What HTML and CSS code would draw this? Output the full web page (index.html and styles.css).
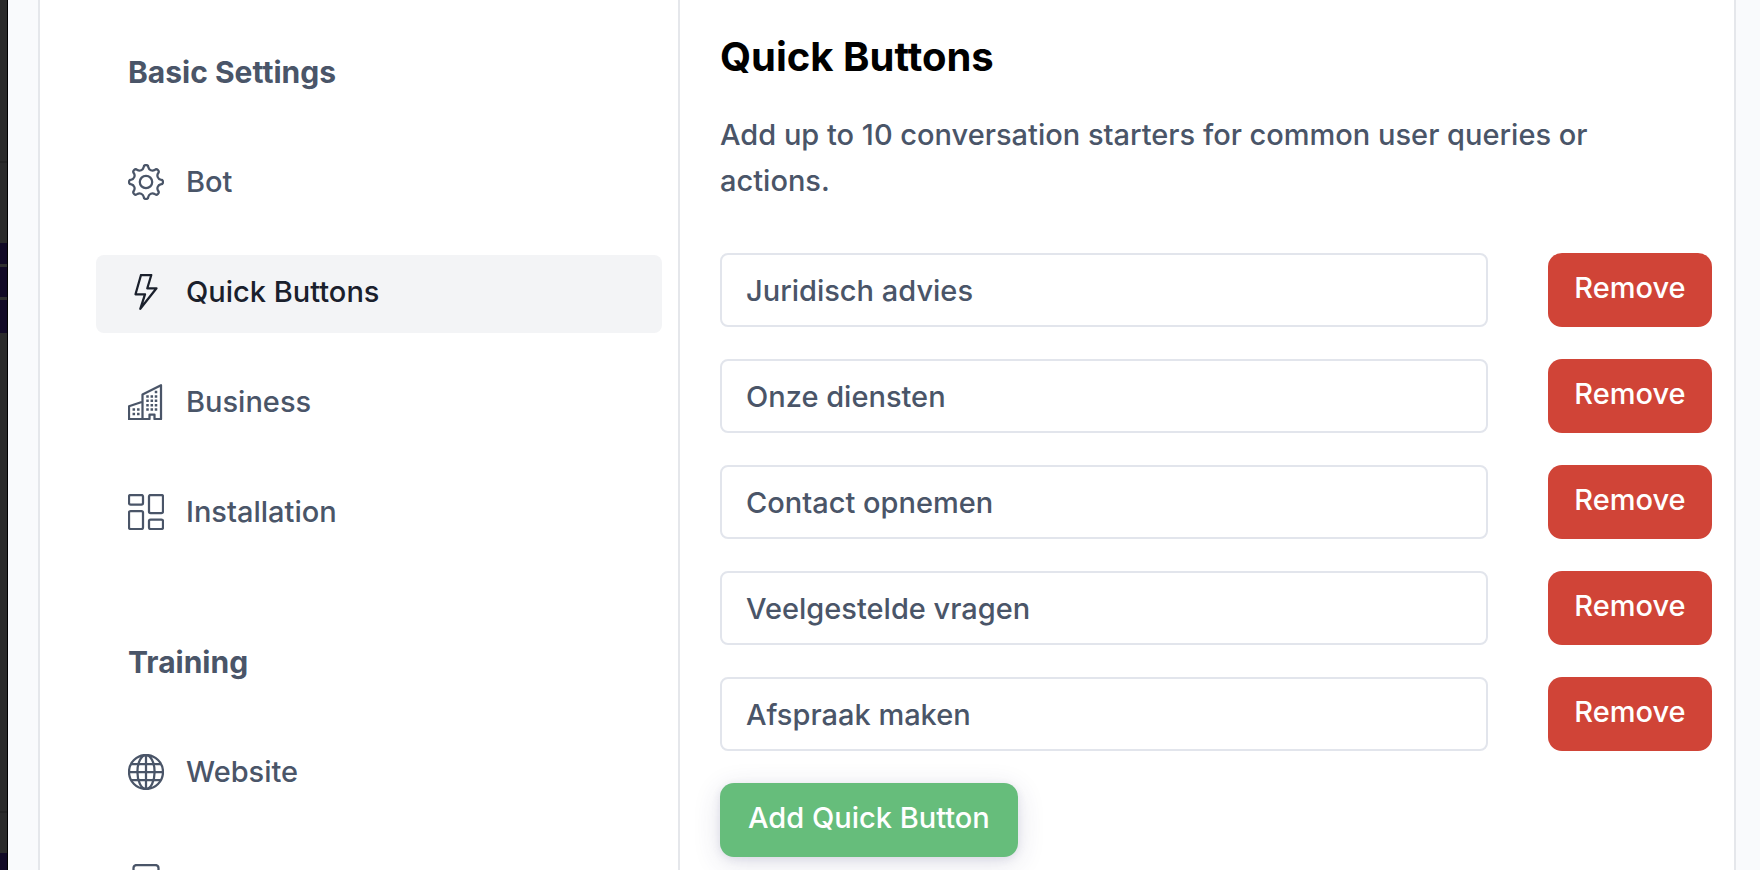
FILE: index.html
```html
<!DOCTYPE html>
<html lang="en">
<head>
  <meta charset="UTF-8">
  <title>Quick Buttons</title>
  <meta name="viewport" content="width=device-width, initial-scale=1.0">
  <link rel="stylesheet" href="styles.css">
</head>
<body>
  <div class="edge"></div>
  <div class="card">
    <nav class="sidebar">
      <h2 class="group">Basic Settings</h2>
      <a class="item" href="#bot">
        <svg class="icon" viewBox="-18 -18 36 36" aria-hidden="true">
          <circle r="6.2"/>
          <path d="M-2.4-14.6A2.4 2.4 0 0 1 2.4-14.6A4.2 4.2 0 0 0 8.63-12.02A2.4 2.4 0 0 1 12.02-8.63A4.2 4.2 0 0 0 14.6-2.4A2.4 2.4 0 0 1 14.6 2.4A4.2 4.2 0 0 0 12.02 8.63A2.4 2.4 0 0 1 8.63 12.02A4.2 4.2 0 0 0 2.4 14.6A2.4 2.4 0 0 1-2.4 14.6A4.2 4.2 0 0 0-8.63 12.02A2.4 2.4 0 0 1-12.02 8.63A4.2 4.2 0 0 0-14.6 2.4A2.4 2.4 0 0 1-14.6-2.4A4.2 4.2 0 0 0-12.02-8.63A2.4 2.4 0 0 1-8.63-12.02A4.2 4.2 0 0 0-2.4-14.6Z"/>
        </svg>
        <span>Bot</span>
      </a>
      <a class="item active" href="#quick-buttons">
        <svg class="icon" viewBox="0 0 36 36" aria-hidden="true">
          <path d="M13 1h10.300l-4 13.300H28.500L12.300 34.800 17 20.300H7.500Z"/>
        </svg>
        <span>Quick Buttons</span>
      </a>
      <a class="item" href="#business">
        <svg class="icon" viewBox="0 0 36 36" aria-hidden="true">
          <path d="M14.500 35H1V22.200L14.500 17.800M14.500 35V10.500L33 1.200V35H26.500V30.500H21.500V35Z"/>
          <path class="dots" d="M28 8h.01M19.500 12.400h.01M23.800 12.400h.01M28 12.400h.01M19.500 16.800h.01M23.800 16.800h.01M28 16.800h.01M19.500 21.200h.01M23.800 21.200h.01M28 21.200h.01M19.500 25.600h.01M23.800 25.600h.01M28 25.600h.01M5.800 25.600h.01M10.300 25.600h.01M5.800 30h.01M10.300 30h.01"/>
        </svg>
        <span>Business</span>
      </a>
      <a class="item" href="#installation">
        <svg class="icon" viewBox="0 0 36 36" aria-hidden="true">
          <rect x="1" y="1" width="14" height="9.500" rx="1.600"/>
          <rect x="1" y="17" width="14" height="18" rx="1.600"/>
          <rect x="21" y="1" width="14" height="18" rx="1.600"/>
          <rect x="21" y="25.500" width="14" height="9.500" rx="1.600"/>
        </svg>
        <span>Installation</span>
      </a>
      <h2 class="group">Training</h2>
      <a class="item" href="#website">
        <svg class="icon" viewBox="0 0 36 36" aria-hidden="true">
          <circle cx="18" cy="18" r="17"/>
          <ellipse cx="18" cy="18" rx="8.600" ry="17"/>
          <path d="M18 1V35M1 18H35M3.200 10H32.800M3.200 26H32.800"/>
        </svg>
        <span>Website</span>
      </a>
      <a class="item" href="#files" aria-label="Files">
        <svg class="icon" viewBox="0 0 36 36" aria-hidden="true">
          <rect x="5.500" y="1" width="25" height="34" rx="3"/>
        </svg>
      </a>
    </nav>

    <main class="content">
      <h1>Quick Buttons</h1>
      <p>Add up to 10 conversation starters for common user queries or actions.</p>
      <form class="list">
        <div class="row">
          <input type="text" value="Juridisch advies" aria-label="Quick button 1">
          <button class="btn remove" type="button">Remove</button>
        </div>
        <div class="row">
          <input type="text" value="Onze diensten" aria-label="Quick button 2">
          <button class="btn remove" type="button">Remove</button>
        </div>
        <div class="row">
          <input type="text" value="Contact opnemen" aria-label="Quick button 3">
          <button class="btn remove" type="button">Remove</button>
        </div>
        <div class="row">
          <input type="text" value="Veelgestelde vragen" aria-label="Quick button 4">
          <button class="btn remove" type="button">Remove</button>
        </div>
        <div class="row">
          <input type="text" value="Afspraak maken" aria-label="Quick button 5">
          <button class="btn remove" type="button">Remove</button>
        </div>
        <button class="btn add" type="button">Add Quick Button</button>
      </form>
    </main>
  </div>
</body>
</html>
```

FILE: styles.css
```css
* { box-sizing: border-box; }
body { margin: 0; height: 100vh; overflow: hidden; display: flex; background: #f9fafc; color: #4a5568; font-family: Inter, "Liberation Sans", sans-serif; font-size: 29px; font-weight: 500; line-height: 46px; }

.edge {
  width: 8px;
  flex: none;
  border-right: 1px solid #000;
  background: linear-gradient(#2b2b2b 0 161px, #242424 161px 163px, #2b2b2b 163px 243px, #120a26 243px 264px, #2f2f2f 264px 267px, #120a26 267px 297px, #2f2f2f 297px 300px, #120a26 300px 333px, #2b2b2b 333px 811px, #242424 811px 813px, #2b2b2b 813px 853px, #120a26 853px);
}
.card { flex: 1; min-width: 0; display: flex; margin: 0 24px 0 30px; background: #fff; border: solid #e5e7eb; border-width: 0 2px; }

/* sidebar */
.sidebar { width: 640px; flex: none; display: flex; flex-direction: column; gap: 32px; padding: 35px 16px 0 56px; border-right: 2px solid #e5e7eb; overflow: hidden; }
.group, .item { flex: none; height: 78px; margin: 0; padding: 0 32px 4px; display: flex; align-items: center; }
.group { font-size: 30px; font-weight: 700; }
.item + .group { margin-top: 40px; }
.item { gap: 22px; border-radius: 8px; color: inherit; text-decoration: none; }
.active { background: #f3f4f6; color: #1a202c; }
.icon { width: 36px; height: 36px; flex: none; fill: none; stroke: currentColor; stroke-width: 2.25; stroke-linejoin: round; }
.dots { stroke-width: 2.5; stroke-linecap: square; }

/* content */
.content { flex: 1; min-width: 0; padding: 33px 22px 0 40px; }
h1 { margin: 0; color: #000; font-size: 40px; line-height: 48px; }
p { margin: 31px 0 49px; padding-right: 32px; }
.list { display: flex; flex-direction: column; align-items: flex-start; gap: 32px; }
.row { width: 100%; display: flex; gap: 60px; }
input { flex: 1; min-width: 0; height: 74px; padding: 0 24px; border: 2px solid #e2e5ec; border-radius: 8px; background: #fff; color: inherit; font: inherit; }
.btn { height: 74px; padding: 0 28px 4px; border: none; border-radius: 14px; color: #fff; font: inherit; cursor: pointer; }
.remove { width: 164px; padding: 0 0 4px; background: #d04437; }
.add { background: #66bd7b; box-shadow: 0 6px 28px rgba(50, 50, 105, 0.14), 0 2px 8px rgba(50, 50, 105, 0.1); }
```
